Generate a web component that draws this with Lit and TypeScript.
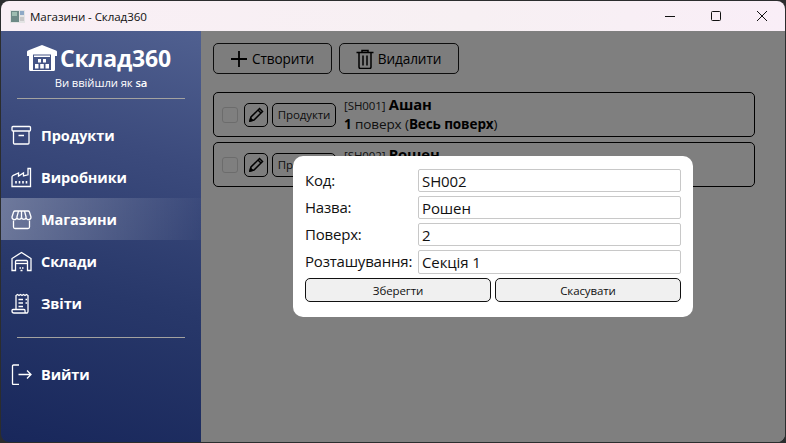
import { html, css, LitElement, svg } from 'lit';
import { customElement } from 'lit/decorators.js';
import { classMap } from 'lit/directives/class-map.js';

const navIcons = {
  box: svg`<rect x="1" y="1.500" width="18.500" height="4.500" rx="1"/><path d="M2.500 6v12a1 1 0 0 0 1 1h13.500a1 1 0 0 0 1-1V6"/><path d="M7.500 10.500h5.500"/>`,
  factory: svg`<path d="M1 19.500V10a1.500 1.500 0 0 1 .8-1.300L7.500 6v3l5-3v3l4.500-1.200V1.500h2.500v18z"/><path d="M5 14v2.500M8.500 14v2.500M12 14v2.500M15.500 14v2.500" stroke-width="1.600"/>`,
  store: svg`<path d="M4 2h13a1.500 1.500 0 0 1 1.400 1l1.600 5a2.400 2.400 0 0 1-4.800.5 2.400 2.400 0 0 1-4.700 0 2.400 2.400 0 0 1-4.700 0A2.400 2.400 0 0 1 1 8l1.600-5A1.500 1.500 0 0 1 4 2z"/><path d="M7.500 2 5.800 8.500M10.500 2v6.500M13.500 2l1.700 6.500"/><path d="M2.500 11.500V18a1.500 1.500 0 0 0 1.500 1.500h13a1.500 1.500 0 0 0 1.500-1.500v-6.500"/>`,
  warehouse: svg`<path d="M1 19.500V7.500l9.500-6 9.500 6v12h-3.500V10.500a1 1 0 0 0-1-1H5.500a1 1 0 0 0-1 1v9z"/><path d="M5 12.500h11"/><path d="M8.500 17h1.500M11 17h1.500M9.500 19.500h2" stroke-width="1.600"/>`,
  report: svg`<path d="M5 16.500V2.500l1.500-1 1.500 1 1.500-1 1.500 1 1.500-1 1.500 1 1.500-1 1.500 1V18.500a1.500 1.500 0 0 1-3 0V17.500a1 1 0 0 0-1-1H2a1 1 0 0 0-1 1V18a2 2 0 0 0 2 2h14"/><path d="M7.500 6.500h4.500M14.500 6.500h1.500M7.500 10h4.500M14.500 10h1.500M7.500 13.500h4.500"/>`,
  logout: svg`<path d="M8 1H2.500a1 1 0 0 0-1 1v17.500a1 1 0 0 0 1 1H8"/><path d="M7.500 10.500H20M16 6.500l4 4-4 4"/>`,
};

const navItems = [
  { icon: navIcons.box, label: 'Продукти' },
  { icon: navIcons.factory, label: 'Виробники' },
  { icon: navIcons.store, label: 'Магазини', active: true },
  { icon: navIcons.warehouse, label: 'Склади' },
  { icon: navIcons.report, label: 'Звіти' },
];

const shops = [
  { code: 'SH001', name: 'Ашан', floor: '1', location: 'Весь поверх' },
  { code: 'SH002', name: 'Рошен', floor: '2', location: 'Секція 1' },
];

const fields = [
  { label: 'Код:', value: 'SH002' },
  { label: 'Назва:', value: 'Рошен' },
  { label: 'Поверх:', value: '2' },
  { label: 'Розташування:', value: 'Секція 1' },
];

@customElement('app-root')
export class AppRoot extends LitElement {
  static styles = css`
    :host {
      display: block;
      width: 786px;
      height: 443px;
      background: #2b2d2e;
      font-family: 'Open Sans', 'Noto Sans', sans-serif;
      color: #000;
      overflow: hidden;
    }

    .window {
      height: 441px;
      margin: 1px 1px 0 1px;
      display: flex;
      flex-direction: column;
      border-radius: 8px;
      overflow: hidden;
    }

    .titlebar {
      height: 30px;
      flex: none;
      display: flex;
      align-items: center;
      background: linear-gradient(90deg, #f9eff5, #f7f0f3 60%, #f9eef7);
      font-size: 11.6px;
      color: #111;
    }

    .app-icon {
      width: 15px;
      height: 13px;
      margin: 0 5px 0 9px;
    }

    .title {
      flex: 1;
      letter-spacing: -0.1px;
    }

    .caption {
      width: 46px;
      height: 30px;
      display: flex;
      align-items: center;
      justify-content: center;
    }

    .caption svg {
      width: 12px;
      height: 12px;
      fill: none;
      stroke: #111;
      stroke-width: 1;
    }

    .body {
      flex: 1;
      display: flex;
      min-height: 0;
    }

    .sidebar {
      width: 200px;
      flex: none;
      display: flex;
      flex-direction: column;
      color: #fff;
      background: linear-gradient(195deg, #506090 0%, #3b4a7c 30%, #28386a 62%, #18275b 100%);
    }

    .brand {
      height: 67px;
      display: flex;
      flex-direction: column;
      align-items: center;
    }

    .logo {
      display: flex;
      align-items: center;
      gap: 3px;
      margin: 11px 4px 0 0;
      font-size: 23px;
      line-height: 32px;
      font-weight: 700;
      letter-spacing: -0.15px;
    }

    .logo svg {
      width: 30px;
      height: 26px;
      fill: #fff;
    }

    .who {
      margin-top: 1px;
      font-size: 11.3px;
      line-height: 15px;
      letter-spacing: -0.1px;
    }

    .who b {
      font-weight: 600;
    }

    .rule {
      height: 1px;
      margin: 0 16px;
      background: #a3a2a0;
      flex: none;
    }

    .rule.lower {
      margin-top: 13px;
    }

    .nav {
      display: flex;
      flex-direction: column;
      margin-top: 15px;
    }

    .item {
      height: 42px;
      display: flex;
      align-items: center;
      gap: 9px;
      padding-left: 10px;
      font-size: 14.5px;
      font-weight: 700;
      letter-spacing: -0.1px;
    }

    .item.active {
      background: linear-gradient(90deg, rgba(255, 255, 255, 0.3), rgba(255, 255, 255, 0.02) 100%);
    }

    .item svg {
      width: 21px;
      height: 21px;
      flex: none;
      fill: none;
      stroke: #fff;
      stroke-width: 1.300;
    }

    .logout {
      margin-top: 15px;
    }

    .main {
      flex: 1;
      position: relative;
      padding: 12px 30px 0 12px;
      display: flex;
      flex-direction: column;
      background: #fff;
    }

    .toolbar {
      display: flex;
      gap: 7px;
      margin-bottom: 18px;
    }

    .tool {
      height: 31px;
      box-sizing: border-box;
      display: flex;
      align-items: center;
      justify-content: center;
      gap: 3px;
      padding-right: 2px;
      border: 1px solid #1a1a1a;
      border-radius: 5px;
      background: #fafafa;
      font-size: 13.6px;
      letter-spacing: -0.1px;
      color: #000;
    }

    .tool.create {
      width: 119px;
    }

    .tool.remove {
      width: 120px;
    }

    .tool svg {
      width: 20px;
      height: 20px;
      fill: none;
      stroke: #000;
    }

    .rows {
      display: flex;
      flex-direction: column;
      gap: 5px;
    }

    .row {
      height: 45px;
      box-sizing: border-box;
      display: flex;
      align-items: center;
      border: 1px solid #000;
      border-radius: 5px;
      padding-left: 8px;
    }

    .check {
      width: 16px;
      height: 16px;
      box-sizing: border-box;
      border: 1px solid #d8d8d8;
      border-radius: 3px;
      background: #fff;
      margin-right: 6px;
    }

    .edit,
    .products {
      height: 24px;
      box-sizing: border-box;
      display: flex;
      align-items: center;
      justify-content: center;
      border: 1px solid #000;
      border-radius: 5px;
      background: #fafafa;
    }

    .edit {
      width: 24px;
      margin-right: 4px;
    }

    .edit svg {
      width: 16px;
      height: 16px;
      fill: none;
      stroke: #000;
      stroke-width: 1.500;
    }

    .products {
      width: 64px;
      margin-right: 8px;
      font-size: 11.500px;
      letter-spacing: -0.1px;
      color: #222;
    }

    .info {
      display: flex;
      flex-direction: column;
      font-size: 13.5px;
      line-height: 19px;
      letter-spacing: -0.1px;
      color: #222;
    }

    .code {
      font-size: 11.5px;
    }

    .name {
      font-size: 14.800px;
      font-weight: 700;
      color: #000;
    }

    .info b {
      font-weight: 700;
      color: #000;
    }

    .scrim {
      position: absolute;
      inset: 0;
      background: rgba(0, 0, 0, 0.5);
    }

    .dialog {
      position: absolute;
      left: 92px;
      top: 125px;
      width: 400px;
      height: 161px;
      box-sizing: border-box;
      padding: 13px 12px 0;
      background: #fff;
      border-radius: 10px;
    }

    .form {
      display: grid;
      grid-template-columns: 113px 263px;
      grid-template-rows: 23px 23px 23px 24px;
      row-gap: 4px;
      font-size: 15px;
      letter-spacing: -0.2px;
      color: #111;
    }

    .form label {
      line-height: 23px;
    }

    .input {
      box-sizing: border-box;
      border: 1px solid #c8c8c8;
      border-radius: 2px;
      padding-left: 3px;
      line-height: 23px;
      letter-spacing: -0.1px;
      color: #111;
    }

    .actions {
      display: flex;
      gap: 4px;
      margin-top: 4px;
    }

    .actions button {
      flex: 1;
      height: 24px;
      padding: 0;
      border: 1px solid #111;
      border-radius: 5px;
      background: #f0f0f0;
      font: 11.500px 'Open Sans', 'Noto Sans', sans-serif;
      letter-spacing: -0.1px;
      color: #111;
    }
  `;

  private renderRow(shop: (typeof shops)[number]) {
    return html`
      <div class="row">
        <span class="check"></span>
        <span class="edit">
          <svg viewBox="0 0 16 16">
            <path d="M2 14l1-4L11.500 1.500l3 3L6 13z" />
            <path d="M10 3l3 3" />
            <path d="M2 14l.6-2.600 2 2z" fill="#000" />
          </svg>
        </span>
        <span class="products">Продукти</span>
        <div class="info">
          <span><span class="code">[${shop.code}]</span> <span class="name">${shop.name}</span></span>
          <span><b>${shop.floor}</b> поверх (<b>${shop.location}</b>)</span>
        </div>
      </div>
    `;
  }

  render() {
    return html`
      <div class="window">
        <header class="titlebar">
          <svg class="app-icon" viewBox="0 0 15 13">
            <rect width="15" height="13" fill="#e4e4e4" />
            <rect x="1" y="1" width="8" height="11" fill="#6d8a86" />
            <rect x="2" y="2" width="5" height="4" fill="#9dbdb0" />
            <rect x="10" y="1" width="4" height="4" fill="#8fa9c6" />
            <rect x="10" y="7" width="4" height="4" fill="#c8c8c8" />
          </svg>
          <span class="title">Магазини - Склад360</span>
          <span class="caption"><svg viewBox="0 0 12 12"><path d="M1 6.500h10" /></svg></span>
          <span class="caption"><svg viewBox="0 0 12 12"><rect x="1.500" y="1.500" width="9" height="9" rx="1" /></svg></span>
          <span class="caption"><svg viewBox="0 0 12 12"><path d="m1 1 10 10M11 1 1 11" /></svg></span>
        </header>
        <div class="body">
          <aside class="sidebar">
            <div class="brand">
              <div class="logo">
                <svg viewBox="0 0 30 26">
                  <path fill-rule="evenodd" d="M15 0l14 5.500a1.500 1.500 0 0 1 1 1.500v4h-2v13.500a1.500 1.500 0 0 1-1.500 1.500h-23A1.500 1.500 0 0 1 2 24.500V11H0V7a1.500 1.500 0 0 1 1-1.500zM6 9.500V25h18V9.500z" />
                  <path d="M10 4.500h10v1.600H10zM7 10.500h16v1.500H7zM11 14h3v3.500h-3zM16 14h3v3.500h-3zM8 19h3.500v4.500H8zM13.200 19h3.600v4.500h-3.600zM18.500 19H22v4.500h-3.500z" />
                </svg>
                <span>Склад360</span>
              </div>
              <div class="who">Ви ввійшли як <b>sa</b></div>
            </div>
            <div class="rule"></div>
            <nav class="nav">
              ${navItems.map(
                (item) => html`
                  <div class=${classMap({ item: true, active: !!item.active })}>
                    <svg viewBox="0 0 21 21">${item.icon}</svg>
                    <span>${item.label}</span>
                  </div>
                `,
              )}
            </nav>
            <div class="rule lower"></div>
            <div class="item logout">
              <svg viewBox="0 0 21 21">${navIcons.logout}</svg>
              <span>Вийти</span>
            </div>
          </aside>
          <main class="main">
            <div class="toolbar">
              <div class="tool create">
                <svg viewBox="0 0 20 20" stroke-width="1.800"><path d="M10 2v16M2 10h16" /></svg>
                Створити
              </div>
              <div class="tool remove">
                <svg viewBox="0 0 20 20" stroke-width="1.500">
                  <path d="M1.500 3.500h17M7 3.500V1.500h6v2M4 3.500V18a1.500 1.500 0 0 0 1.500 1.500h9A1.500 1.500 0 0 0 16 18V3.500M8 6.500v10M12 6.500v10" />
                </svg>
                Видалити
              </div>
            </div>
            <div class="rows">${shops.map((shop) => this.renderRow(shop))}</div>
            <div class="scrim"></div>
            <div class="dialog">
              <div class="form">
                ${fields.map(
                  (field) => html`
                    <label>${field.label}</label>
                    <div class="input">${field.value}</div>
                  `,
                )}
              </div>
              <div class="actions">
                <button>Зберегти</button>
                <button>Скасувати</button>
              </div>
            </div>
          </main>
        </div>
      </div>
    `;
  }
}
